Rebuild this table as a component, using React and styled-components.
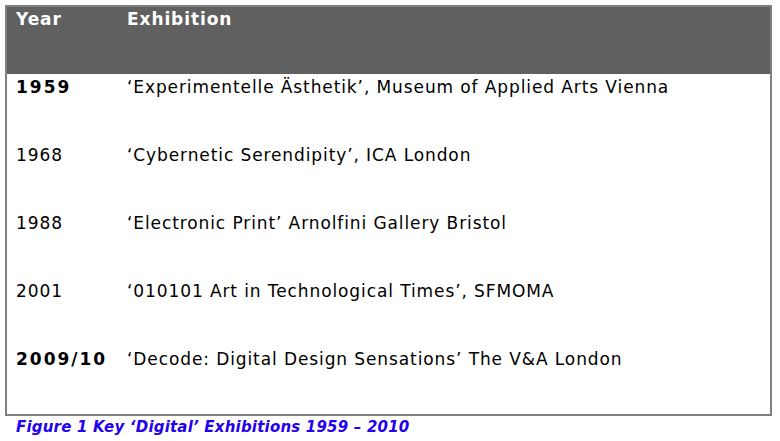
import React from "react";
import styled, { createGlobalStyle } from "styled-components";

const rows = [
  { year: "1959", bold: true, text: "‘Experimentelle Ästhetik’, Museum of Applied Arts Vienna" },
  { year: "1968", text: "‘Cybernetic Serendipity’, ICA London" },
  { year: "1988", text: "‘Electronic Print’ Arnolfini Gallery Bristol" },
  { year: "2001", text: "‘010101 Art in Technological Times’, SFMOMA" },
  { year: "2009/10", bold: true, text: "‘Decode: Digital Design Sensations’ The V&A London" },
];

const Global = createGlobalStyle`
  body {
    margin: 0;
    background: #fff;
    font-family: "DejaVu Sans", Verdana, sans-serif;
  }
`;

const Page = styled.div`
  padding: 5px 0 0 5px;
`;

const Table = styled.table`
  width: 767px;
  table-layout: fixed;
  border: 2px solid #808080;
  border-collapse: separate;
  border-spacing: 0;
  font-size: 17px;
  color: #000;
`;

const HeadCell = styled.th`
  background: #606060;
  color: #fff;
  font-weight: bold;
  letter-spacing: 0.9px;
  text-align: left;
  vertical-align: top;
  height: 67px;
  padding: 2px 0 0 9px;
  box-sizing: border-box;
  width: ${(p) => (p.$first ? "111px" : "auto")};
`;

const Cell = styled.td`
  vertical-align: top;
  height: 68px;
  padding: 3px 0 0 9px;
  box-sizing: border-box;
  font-weight: ${(p) => (p.$bold ? "bold" : "normal")};
  letter-spacing: ${(p) => (p.$bold ? "2px" : "0.9px")};
  white-space: nowrap;
`;

const Caption = styled.div`
  margin: 2px 0 0 11px;
  color: #2400ee;
  font-size: 15px;
  font-weight: bold;
  font-style: italic;
  letter-spacing: 0.2px;
`;

export default function App() {
  return (
    <Page>
      <Global />
      <Table>
        <thead>
          <tr>
            <HeadCell $first>Year</HeadCell>
            <HeadCell>Exhibition</HeadCell>
          </tr>
        </thead>
        <tbody>
          {rows.map((r, i) => (
            <tr key={i}>
              <Cell $bold={r.bold}>{r.year}</Cell>
              <Cell>{r.text}</Cell>
            </tr>
          ))}
        </tbody>
      </Table>
      <Caption>Figure 1 Key ‘Digital’ Exhibitions 1959 – 2010</Caption>
    </Page>
  );
}
